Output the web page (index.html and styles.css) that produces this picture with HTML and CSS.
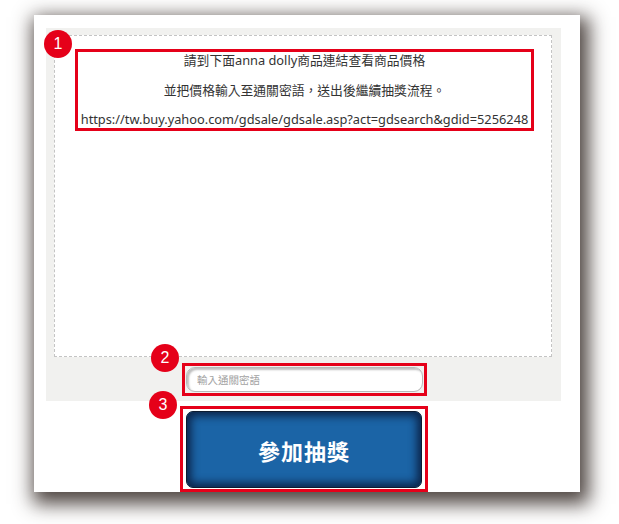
FILE: index.html
```html
<!DOCTYPE html>
<html lang="zh-Hant">
<head>
<meta charset="utf-8">
<link rel="stylesheet" href="styles.css">
</head>
<body>
<div class="card">
  <div class="panel">
    <div class="dashed">
      <div class="note">
        <p>請到下面anna dolly商品連結查看商品價格</p>
        <p>並把價格輸入至通關密語，送出後繼續抽獎流程。</p>
        <p>https://tw.buy.yahoo.com/gdsale/gdsale.asp?act=gdsearch&amp;gdid=5256248</p>
      </div>
    </div>
    <div class="input-box">
      <input class="pass" type="text" placeholder="輸入通關密語">
    </div>
  </div>
  <div class="btn-box">
    <button class="join">參加抽獎</button>
  </div>
  <span class="badge b1">1</span>
  <span class="badge b2">2</span>
  <span class="badge b3">3</span>
</div>
</body>
</html>
```
FILE: styles.css
```css
html, body {
  margin: 0;
  padding: 0;
  background: #ffffff;
}
body {
  width: 619px;
  height: 524px;
  overflow: hidden;
  font-family: "Noto Sans", "Noto Sans CJK TC", sans-serif;
}
.card {
  position: relative;
  box-sizing: border-box;
  margin: 15px 0 0 34px;
  width: 546px;
  height: 477px;
  background: #fff;
  padding: 13px 0 0 12px;
  box-shadow: 4px 7px 18px 5px rgba(60, 50, 45, 0.9);
}
.panel {
  box-sizing: border-box;
  width: 515px;
  height: 373px;
  background: #f1f1ef;
  padding: 7px 8px 0 8px;
}
.dashed {
  box-sizing: border-box;
  width: 498px;
  height: 322px;
  background: #fff;
  border: 1px dashed #c4c4c4;
  padding: 13px 0 0 20px;
}
.note {
  box-sizing: border-box;
  width: 459px;
  height: 82px;
  border: 3px solid #e50019;
  padding-top: 1px;
  display: flex;
  flex-direction: column;
  gap: 14px;
  align-items: center;
  color: #333;
  font-size: 12.8px;
  line-height: 15.5px;
}
.note p {
  margin: 0;
  white-space: nowrap;
}
.input-box {
  box-sizing: border-box;
  margin: 6px 0 0 128px;
  width: 245px;
  height: 33px;
  border: 3px solid #e50019;
  padding: 1px;
  background: #f1f1ef;
}
.pass {
  box-sizing: border-box;
  display: block;
  width: 100%;
  height: 100%;
  border: 1px solid #b8b8b8;
  border-radius: 9px;
  box-shadow: inset 2px 2px 2px rgba(0, 0, 0, 0.25);
  background: #fff;
  padding: 0 10px;
  font-family: "Noto Sans CJK TC", sans-serif;
  font-size: 10.5px;
  outline: none;
}
.pass::placeholder {
  color: #a3a3a3;
}
.btn-box {
  box-sizing: border-box;
  margin: 5px 0 0 134px;
  width: 248px;
  height: 86px;
  border: 3px solid #e50019;
  padding: 2px 3px 1px 3px;
}
.join {
  display: block;
  width: 100%;
  height: 100%;
  border: 1px solid #0d1b30;
  border-radius: 7px;
  background: #1b64a6;
  box-shadow: inset 0 0 9px 4px #0c2449;
  color: #fff;
  font-family: "Noto Sans CJK TC", sans-serif;
  font-weight: 700;
  font-size: 22px;
  letter-spacing: 1px;
  padding: 0;
}
.badge {
  position: absolute;
  width: 28px;
  height: 28px;
  border-radius: 50%;
  background: #e50019;
  color: #fff;
  font-family: "Liberation Sans", Arial, sans-serif;
  font-size: 16px;
  line-height: 28px;
  text-align: center;
}
.b1 { left: 10px; top: 15px; }
.b2 { left: 117px; top: 329px; }
.b3 { left: 115px; top: 376px; }
```
